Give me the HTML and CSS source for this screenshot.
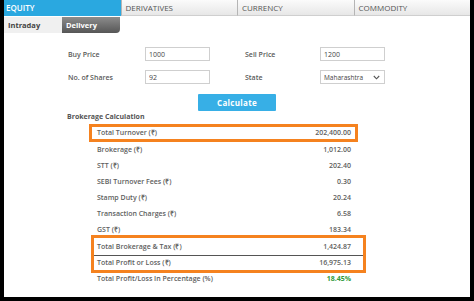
FILE: index.html
```html
<!DOCTYPE html>
<html lang="en">
<head>
  <meta charset="UTF-8" />
  <title>Brokerage Calculator</title>
  <link rel="stylesheet" href="styles.css">
</head>
<body>
  <div class="frame">
    <!-- Market tabs -->
    <nav class="tabs">
      <a class="tab active">EQUITY</a>
      <a class="tab">DERIVATIVES</a>
      <a class="tab">CURRENCY</a>
      <a class="tab">COMMODITY</a>
    </nav>
    <div class="subtabs">
      <span class="subtab">Intraday</span>
      <span class="subtab active">Delivery</span>
    </div>

    <!-- Inputs -->
    <form class="calc-form">
      <div class="fields">
        <label>Buy Price</label>
        <input type="text" value="1000">
        <label>Sell Price</label>
        <input type="text" value="1200">
        <label>No. of Shares</label>
        <input type="text" value="92">
        <label>State</label>
        <div class="select">
          <span>Maharashtra</span>
          <svg width="7" height="5" viewBox="0 0 7 5"><path d="M0.8 1 L3.5 3.8 L6.2 1" fill="none" stroke="#555" stroke-width="1.1"/></svg>
        </div>
      </div>
      <button type="button" class="calc-btn">Calculate</button>
    </form>

    <h3 class="section-title">Brokerage Calculation</h3>

    <!-- Results -->
    <div class="results">
      <div class="hl-box">
        <div class="row"><span>Total Turnover (₹)</span><span>202,400.00</span></div>
      </div>
      <div class="row"><span>Brokerage (₹)</span><span>1,012.00</span></div>
      <div class="row"><span>STT (₹)</span><span>202.40</span></div>
      <div class="row"><span>SEBI Turnover Fees (₹)</span><span>0.30</span></div>
      <div class="row"><span>Stamp Duty (₹)</span><span>20.24</span></div>
      <div class="row"><span>Transaction Charges (₹)</span><span>6.58</span></div>
      <div class="row"><span>GST (₹)</span><span>183.34</span></div>
      <div class="hl-box wide">
        <div class="row total"><span>Total Brokerage &amp; Tax (₹)</span><span>1,424.87</span></div>
        <div class="row pl"><span>Total Profit or Loss (₹)</span><span>16,975.13</span></div>
      </div>
      <div class="row pct"><span>Total Profit/Loss In Percentage (%)</span><span class="green">18.45%</span></div>
    </div>
  </div>
</body>
</html>
```

FILE: styles.css
```css
* {
  box-sizing: border-box;
}
body {
  margin: 0;
  background: #000;
  font-family: 'Open Sans', 'Liberation Sans', sans-serif;
  color: #5a5a5a;
}
.frame {
  margin: 0 4px;
  height: 297px;
  background: #fff;
  overflow: hidden;
}
/* Top tabs */
.tabs {
  display: grid;
  grid-template-columns: repeat(4, 1fr);
}
.tab {
  height: 16px;
  line-height: 16px;
  padding-left: 4px;
  font-size: 8px;
  color: #555;
  background: linear-gradient(#fbfbfb, #e7e7e7);
  border-left: 1px solid #b5b5b5;
  border-bottom: 1px solid #cfcfcf;
}
.tab.active {
  padding-left: 2px;
  background: #2aa8e0;
  color: #fff;
  font-weight: 600;
  border: 0;
}
/* Intraday / Delivery */
.subtabs {
  display: flex;
  margin-top: 1px;
  height: 16px;
}
.subtab {
  width: 58px;
  line-height: 16px;
  padding-left: 4px;
  font-size: 7.5px;
  font-weight: 700;
  color: #444;
  background: #f0f0f0;
}
.subtab.active {
  color: #fff;
  background: linear-gradient(#8c8c8c, #565656);
  border-radius: 0 0 4px 0;
}
/* Form */
.calc-form {
  margin: 0;
}
.fields {
  display: grid;
  grid-template-columns: 77px 100px 75px 66px;
  grid-auto-rows: 14px;
  row-gap: 9px;
  align-items: center;
  margin-top: 14px;
  padding-left: 64px;
}
.fields label {
  font-size: 7px;
  font-weight: 600;
  color: #5a5a5a;
}
.fields input,
.select {
  width: 65px;
  height: 14px;
  border: 1px solid #cfcfcf;
  background: #fff;
  padding: 0 3px;
  font-family: inherit;
  font-size: 7px;
  color: #444;
  outline: none;
}
.select {
  display: flex;
  align-items: center;
  justify-content: space-between;
  padding: 0 4px 0 3px;
  font-size: 6.5px;
}
.calc-btn {
  display: block;
  width: 78px;
  height: 17px;
  margin: 10px auto 0;
  border: 0;
  border-radius: 1px;
  background: #37afe6;
  color: #fff;
  font-family: inherit;
  font-size: 8px;
  font-weight: 700;
  letter-spacing: 0.3px;
}
.section-title {
  margin: 1px 0 0;
  padding-left: 63px;
  line-height: 10px;
  font-size: 7px;
  font-weight: 700;
  color: #555;
}
/* Result rows */
.results {
  margin: 2px 0 0 88px;
  width: 263px;
}
.row {
  display: flex;
  justify-content: space-between;
  height: 16px;
  line-height: 16px;
  padding: 0 4px 0 5px;
  font-size: 7px;
  font-weight: 600;
  color: #5e5e5e;
}
.hl-box {
  margin: 0 -3px;
  border: 3px solid #f5821f;
}
.hl-box .row {
  height: 12px;
  line-height: 12px;
}
.hl-box.wide {
  margin: -3px -11px 0 -1px;
}
.hl-box.wide .row {
  padding: 0 12px 0 3px;
}
.hl-box .row.total {
  height: 18px;
  line-height: 18px;
  border-bottom: 1px solid #555;
}
.hl-box .row.pl {
  height: 14px;
  line-height: 14px;
}
.row.pct {
  height: 12px;
  line-height: 12px;
}
.green {
  color: #2f9a3c;
  font-weight: 700;
}
```
